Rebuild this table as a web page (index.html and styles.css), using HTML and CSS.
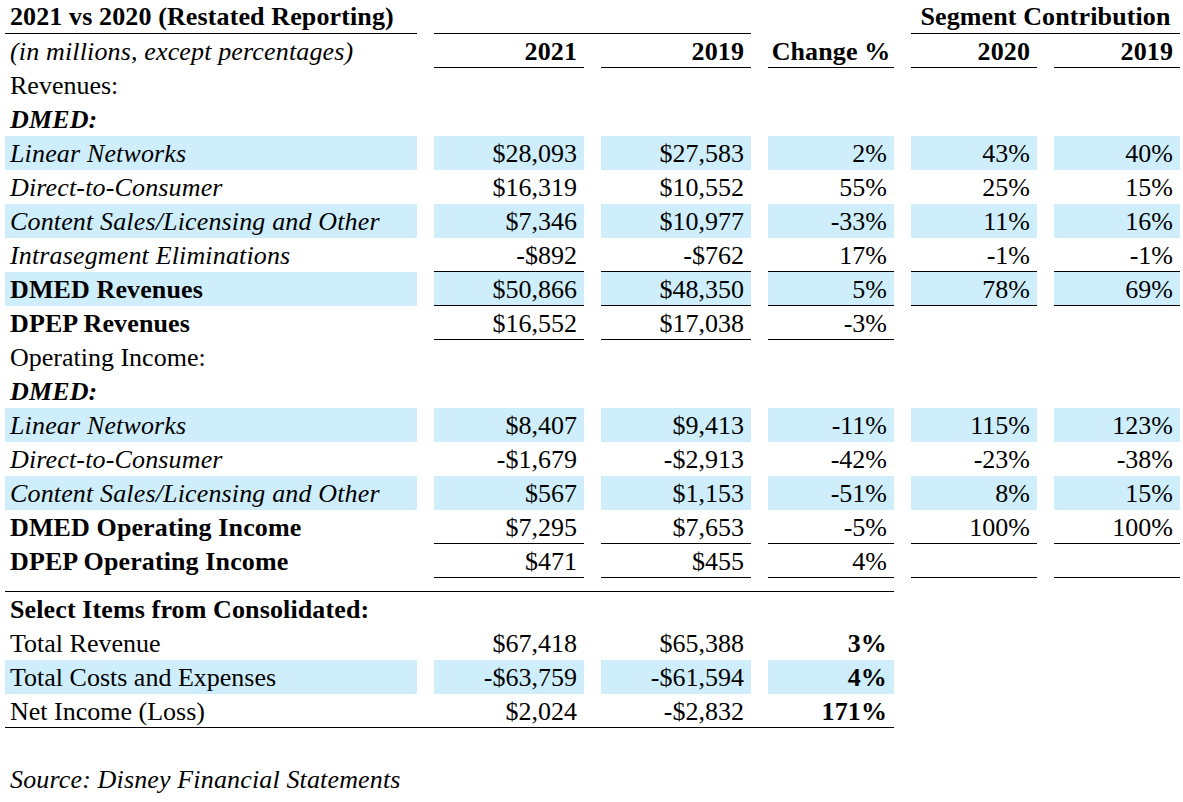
FILE: index.html
```html
<!DOCTYPE html>
<html>
<head>
<meta charset="utf-8">
<link rel="stylesheet" href="styles.css">
</head>
<body>
<table class="fin">
  <colgroup>
    <col class="c-lbl"><col class="c-sp"><col class="c-wide"><col class="c-sp"><col class="c-wide"><col class="c-sp"><col class="c-narrow"><col class="c-sp"><col class="c-narrow"><col class="c-sp"><col class="c-narrow">
  </colgroup>
  <tbody>
    <tr class="r-title">
      <td class="lbl b bb">2021 vs 2020 (Restated Reporting)</td><td></td>
      <td colspan="3" class="bb"></td><td></td>
      <td></td><td></td>
      <td colspan="3" class="ctr b bb">Segment Contribution</td>
    </tr>
    <tr>
      <td class="lbl i">(in millions, except percentages)</td><td></td>
      <td class="num b bb">2021</td><td></td>
      <td class="num b bb">2019</td><td></td>
      <td class="ctr b bb">Change %</td><td></td>
      <td class="num b bb">2020</td><td></td>
      <td class="num b bb">2019</td>
    </tr>
    <tr><td class="lbl">Revenues:</td><td colspan="10"></td></tr>
    <tr><td class="lbl b i">DMED:</td><td colspan="10"></td></tr>
    <tr>
      <td class="lbl i hl">Linear Networks</td><td></td>
      <td class="num hl">$28,093</td><td></td>
      <td class="num hl">$27,583</td><td></td>
      <td class="num hl">2%</td><td></td>
      <td class="num hl">43%</td><td></td>
      <td class="num hl">40%</td>
    </tr>
    <tr>
      <td class="lbl i">Direct-to-Consumer</td><td></td>
      <td class="num">$16,319</td><td></td>
      <td class="num">$10,552</td><td></td>
      <td class="num">55%</td><td></td>
      <td class="num">25%</td><td></td>
      <td class="num">15%</td>
    </tr>
    <tr>
      <td class="lbl i hl">Content Sales/Licensing and Other</td><td></td>
      <td class="num hl">$7,346</td><td></td>
      <td class="num hl">$10,977</td><td></td>
      <td class="num hl">-33%</td><td></td>
      <td class="num hl">11%</td><td></td>
      <td class="num hl">16%</td>
    </tr>
    <tr>
      <td class="lbl i">Intrasegment Eliminations</td><td></td>
      <td class="num bb">-$892</td><td></td>
      <td class="num bb">-$762</td><td></td>
      <td class="num bb">17%</td><td></td>
      <td class="num bb">-1%</td><td></td>
      <td class="num bb">-1%</td>
    </tr>
    <tr>
      <td class="lbl b hl">DMED Revenues</td><td></td>
      <td class="num hl bb">$50,866</td><td></td>
      <td class="num hl bb">$48,350</td><td></td>
      <td class="num hl bb">5%</td><td></td>
      <td class="num hl bb">78%</td><td></td>
      <td class="num hl bb">69%</td>
    </tr>
    <tr>
      <td class="lbl b">DPEP Revenues</td><td></td>
      <td class="num bb">$16,552</td><td></td>
      <td class="num bb">$17,038</td><td></td>
      <td class="num bb">-3%</td><td></td>
      <td></td><td></td><td></td>
    </tr>
    <tr><td class="lbl">Operating Income:</td><td colspan="10"></td></tr>
    <tr><td class="lbl b i">DMED:</td><td colspan="10"></td></tr>
    <tr>
      <td class="lbl i hl">Linear Networks</td><td></td>
      <td class="num hl">$8,407</td><td></td>
      <td class="num hl">$9,413</td><td></td>
      <td class="num hl">-11%</td><td></td>
      <td class="num hl">115%</td><td></td>
      <td class="num hl">123%</td>
    </tr>
    <tr>
      <td class="lbl i">Direct-to-Consumer</td><td></td>
      <td class="num">-$1,679</td><td></td>
      <td class="num">-$2,913</td><td></td>
      <td class="num">-42%</td><td></td>
      <td class="num">-23%</td><td></td>
      <td class="num">-38%</td>
    </tr>
    <tr>
      <td class="lbl i hl">Content Sales/Licensing and Other</td><td></td>
      <td class="num hl">$567</td><td></td>
      <td class="num hl">$1,153</td><td></td>
      <td class="num hl">-51%</td><td></td>
      <td class="num hl">8%</td><td></td>
      <td class="num hl">15%</td>
    </tr>
    <tr>
      <td class="lbl b">DMED Operating Income</td><td></td>
      <td class="num bb">$7,295</td><td></td>
      <td class="num bb">$7,653</td><td></td>
      <td class="num bb">-5%</td><td></td>
      <td class="num bb">100%</td><td></td>
      <td class="num bb">100%</td>
    </tr>
    <tr>
      <td class="lbl b">DPEP Operating Income</td><td></td>
      <td class="num bb">$471</td><td></td>
      <td class="num bb">$455</td><td></td>
      <td class="num bb">4%</td><td></td>
      <td class="num bb"></td><td></td>
      <td class="num bb"></td>
    </tr>
    <tr class="r-gap">
      <td colspan="7" class="bb"></td><td colspan="4"></td>
    </tr>
    <tr><td class="lbl b">Select Items from Consolidated:</td><td colspan="10"></td></tr>
    <tr>
      <td class="lbl">Total Revenue</td><td></td>
      <td class="num">$67,418</td><td></td>
      <td class="num">$65,388</td><td></td>
      <td class="num b">3%</td><td colspan="4"></td>
    </tr>
    <tr>
      <td class="lbl hl">Total Costs and Expenses</td><td></td>
      <td class="num hl">-$63,759</td><td></td>
      <td class="num hl">-$61,594</td><td></td>
      <td class="num hl b">4%</td><td colspan="4"></td>
    </tr>
    <tr>
      <td class="lbl bb">Net Income (Loss)</td><td class="bb"></td>
      <td class="num bb">$2,024</td><td class="bb"></td>
      <td class="num bb">-$2,832</td><td class="bb"></td>
      <td class="num bb b">171%</td><td colspan="4"></td>
    </tr>
    <tr><td colspan="11"></td></tr>
    <tr><td class="lbl i">Source: Disney Financial Statements</td><td colspan="10"></td></tr>
  </tbody>
</table>
</body>
</html>
```

FILE: styles.css
```css
html, body {
  margin: 0;
  padding: 0;
  background: #ffffff;
}

body {
  font-family: "Liberation Serif", "Times New Roman", serif;
  font-size: 26px;
  color: #000000;
}

.fin {
  margin-left: 5px;
  width: 1175px;
  table-layout: fixed;
  border-collapse: separate;
  border-spacing: 0;
}

.c-lbl { width: 412px; }
.c-sp { width: 17px; }
.c-wide { width: 150px; }
.c-narrow { width: 126px; }

.fin td {
  box-sizing: border-box;
  height: 34px;
  padding: 3px 0 0 0;
  line-height: 30px;
  vertical-align: top;
  white-space: nowrap;
  overflow: visible;
}

.fin .r-title td {
  padding-top: 2px;
}

.fin .r-gap td {
  height: 14px;
  padding: 0;
  line-height: 0;
}

.lbl {
  text-align: left;
  padding-left: 5px !important;
}

.fin td.num {
  text-align: right;
  padding-right: 7px;
}

.fin td.ctr {
  text-align: center;
}

.b { font-weight: bold; letter-spacing: 0.12px; }
.i { font-style: italic; letter-spacing: 0.15px; }

.hl { background: #cfeefb; }

.bb { border-bottom: 1px solid #000000; }
```
